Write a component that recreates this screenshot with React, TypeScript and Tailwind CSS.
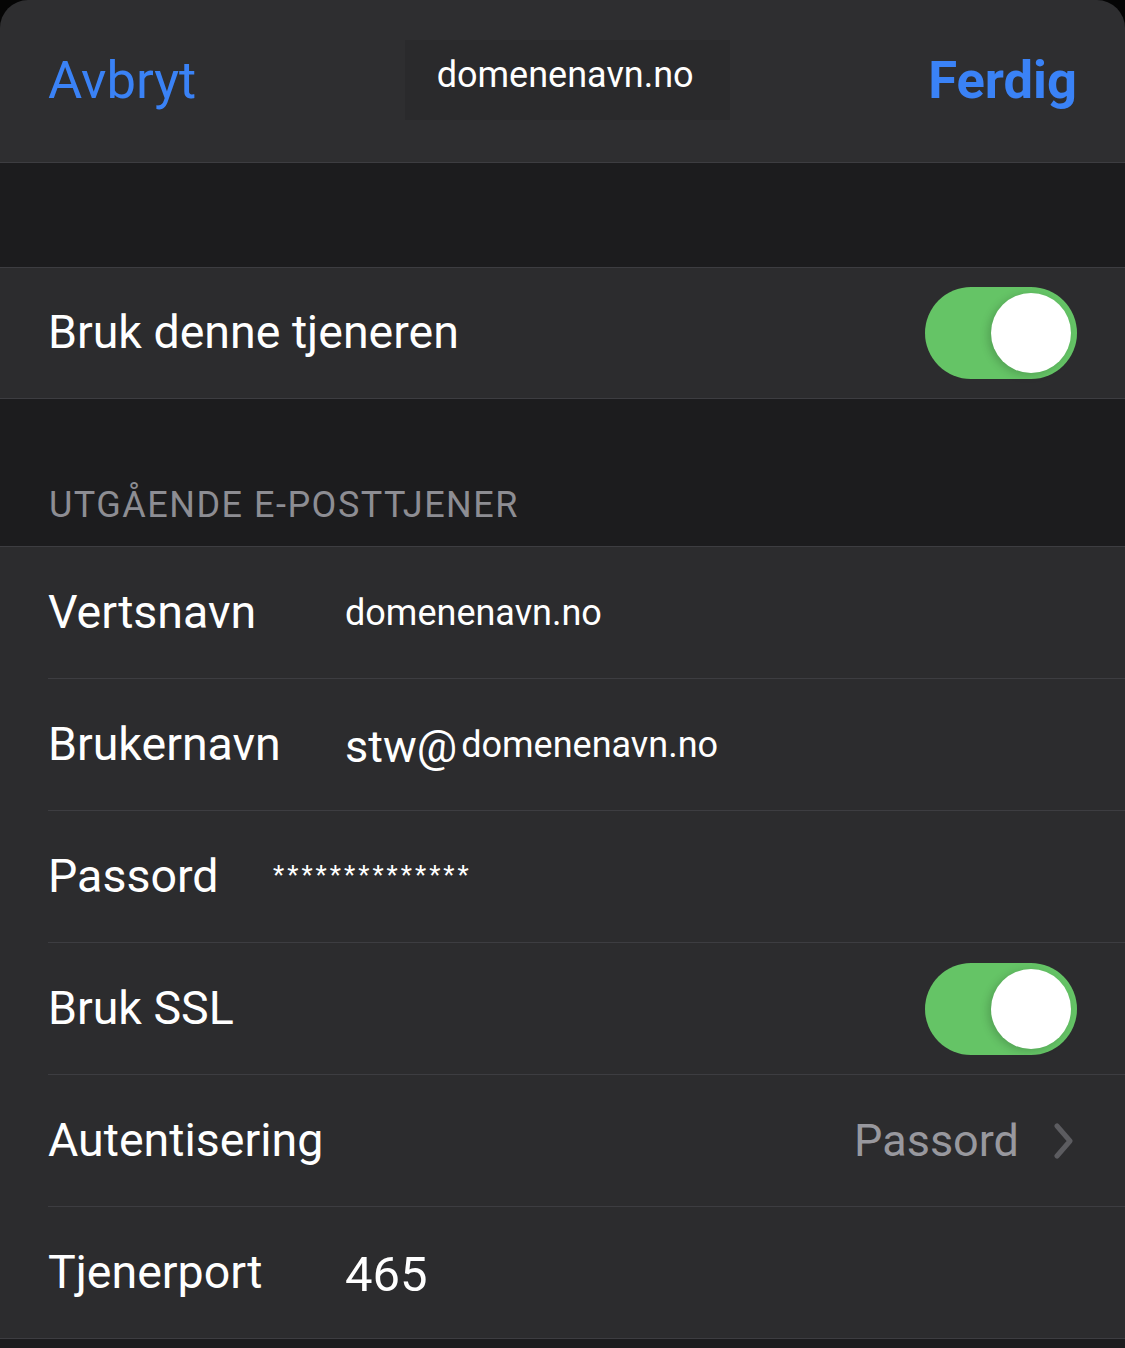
import React from "react";

const Toggle = () => (
  <div className="relative w-[152px] h-[92px] rounded-full bg-[#65c466]">
    <div className="absolute right-[6px] top-[6px] w-[80px] h-[80px] rounded-full bg-white shadow-[-3px_2px_8px_rgba(0,0,0,0.18)]"></div>
  </div>
);

const Chevron = () => (
  <svg width="22" height="36" viewBox="0 0 22 36" fill="none">
    <path d="M4 3 L17 18 L4 33" stroke="#5c5c60" strokeWidth="5" strokeLinecap="round" strokeLinejoin="round" />
  </svg>
);

const Row = ({ children, last = false }: { children: React.ReactNode; last?: boolean }) => (
  <div className={last ? "h-[132px] border-b border-[#3d3d41]" : "pl-[48px]"}>
    <div
      className={
        last
          ? "h-full flex items-center pl-[48px] pr-[50px]"
          : "h-[132px] flex items-center pr-[50px] border-b border-[#3d3d41]"
      }
    >
      {children}
    </div>
  </div>
);

export default function App() {
  return (
    <div className="w-[1125px] h-[1348px] bg-[#050505] overflow-hidden font-['Roboto',sans-serif] text-white">
      {/* nav bar */}
      <div className="h-[163px] rounded-t-[28px] bg-[#2e2e30] border-b border-[#3d3d41] pt-[40px] px-[48px]">
        <div className="h-[80px] flex items-center justify-between">
          <span className="text-[52.5px] text-[#3a82f6] leading-none">Avbryt</span>
          <div className="w-[325px] h-[80px] ml-[10px] bg-[#2a2a2c] flex items-center justify-center">
            <span className="text-[36px] leading-none -mt-[10px] -ml-[4px]">domenenavn.no</span>
          </div>
          <span className="text-[52.5px] font-bold text-[#3a82f6] leading-none">Ferdig</span>
        </div>
      </div>

      <div className="h-[105px] bg-[#1c1c1e] border-b border-[#3d3d41]"></div>

      <div className="h-[131px] bg-[#2c2c2e] border-b border-[#3d3d41] flex items-center justify-between pl-[48px] pr-[48px]">
        <span className="text-[46.5px]">Bruk denne tjeneren</span>
        <Toggle />
      </div>

      <div className="h-[148px] bg-[#1c1c1e] border-b border-[#3d3d41] flex items-end pl-[49px] pb-[14px]">
        <span className="text-[36px] text-[#8d8d93] tracking-[1.5px]">UTGÅENDE E-POSTTJENER</span>
      </div>

      <div className="bg-[#2c2c2e]">
        <Row>
          <span className="w-[297px] text-[46.5px]">Vertsnavn</span>
          <span className="text-[36px]">domenenavn.no</span>
        </Row>
        <Row>
          <span className="w-[297px] text-[46.5px]">Brukernavn</span>
          <span className="text-[45px] mt-[4px]">stw@</span>
          <span className="text-[36px] ml-[4px]">domenenavn.no</span>
        </Row>
        <Row>
          <span className="w-[225px] text-[46.5px]">Passord</span>
          <span className="text-[26px] tracking-[3px] -mt-[2px]">**************</span>
        </Row>
        <Row>
          <span className="flex-1 text-[46.5px]">Bruk SSL</span>
          <div className="-mr-[2px]">
            <Toggle />
          </div>
        </Row>
        <Row>
          <span className="flex-1 text-[46.5px]">Autentisering</span>
          <span className="text-[45px] text-[#98989e] mr-[34px]">Passord</span>
          <Chevron />
        </Row>
        <Row last>
          <span className="w-[297px] text-[46.5px]">Tjenerport</span>
          <span className="text-[49px] mt-[4px]">465</span>
        </Row>
      </div>

      <div className="h-[10px] bg-[#1c1c1e]"></div>
    </div>
  );
}
